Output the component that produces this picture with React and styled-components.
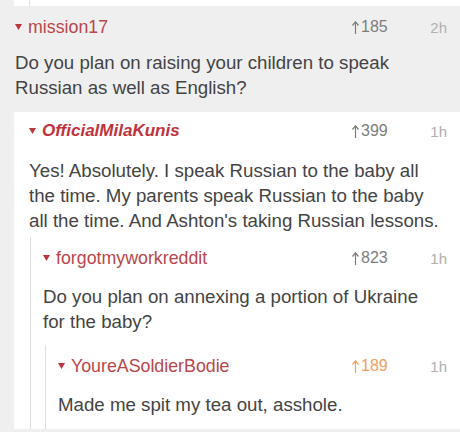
import React from 'react';
import styled, { createGlobalStyle } from 'styled-components';

const GlobalStyle = createGlobalStyle`
  html, body {
    margin: 0;
    padding: 0;
    background: #efefef;
  }
  body {
    font-family: "Liberation Sans", Arial, sans-serif;
    -webkit-font-smoothing: antialiased;
  }
`;

const Page = styled.div`
  width: 460px;
  height: 432px;
  overflow: hidden;
  background: #efefef;
`;

// tail end of the thread above, cut off by the top edge
const PrevTail = styled.div`
  margin-left: 14px;
  height: 6px;
  background: #fff;
  display: flex;
`;

const PrevLine = styled.div`
  margin-left: 15px;
  flex: 1;
  border-left: 1px solid #e2e2e2;
`;

const CommentBox = styled.div`
  background: ${(p) => (p.$depth === 0 ? '#efefef' : '#fff')};
  margin-left: ${(p) => p.$indent}px;
  border-left: ${(p) => (p.$depth >= 2 ? '1px solid #e0e0e0' : 'none')};
`;

const Content = styled.div`
  padding: ${(p) => p.$top}px 13px ${(p) => p.$bottom}px ${(p) => p.$pad}px;
`;

const Header = styled.div`
  display: flex;
  align-items: center;
  height: 22px;
  margin-bottom: ${(p) => p.$gap}px;
`;

const Author = styled.span`
  flex: 1;
  display: flex;
  align-items: center;
  gap: 6px;
  font-size: ${(p) => (p.$op ? 17 : 17.8)}px;
  color: ${(p) => (p.$op ? '#c1323b' : '#b9474b')};
  font-weight: ${(p) => (p.$op ? 700 : 400)};
  font-style: ${(p) => (p.$op ? 'italic' : 'normal')};
`;

const Score = styled.span`
  display: flex;
  align-items: center;
  gap: 2px;
  width: 68px;
  font-size: 16px;
  color: ${(p) => (p.$voted ? '#efa061' : '#7d7d7d')};
`;

const Age = styled.span`
  width: 27px;
  text-align: right;
  font-size: 15px;
  color: #b0b0b0;
`;

const Body = styled.p`
  margin: 0 -8px 0 0;
  font-size: 18.7px;
  line-height: 25px;
  color: #444;
`;

const Line = styled.span`
  display: block;
  white-space: nowrap;
`;

const Caret = () => (
  <svg width="7" height="6" viewBox="0 0 7 6">
    <path d="M0 0 H7 L3.5 6 Z" fill="#b9363c" />
  </svg>
);

const UpArrow = ({ color }) => (
  <svg width="7" height="13" viewBox="0 0 7 13">
    <path d="M3.5 1 V13" stroke={color} strokeWidth="1.2" fill="none" />
    <path d="M0.5 4.5 L3.5 0.8 L6.5 4.5" stroke={color} strokeWidth="1.2" fill="none" />
  </svg>
);

// per nesting level: indent, left padding, top/bottom padding, header gap
const levels = [
  { indent: 0, pad: 15, top: 10, bottom: 12, gap: 12 },
  { indent: 14, pad: 15, top: 8, bottom: 4, gap: 16 },
  { indent: 16, pad: 12, top: 10, bottom: 11, gap: 15 },
  { indent: 14, pad: 12, top: 10, bottom: 12, gap: 15 },
];

const Comment = ({ item, depth = 0 }) => {
  const lv = levels[depth];
  return (
    <CommentBox $depth={depth} $indent={lv.indent}>
      <Content $pad={lv.pad} $top={lv.top} $bottom={lv.bottom}>
        <Header $gap={lv.gap}>
          <Author $op={item.op}>
            <Caret />
            {item.author}
          </Author>
          <Score $voted={item.voted}>
            <UpArrow color={item.voted ? '#efa061' : '#7d7d7d'} />
            {item.score}
          </Score>
          <Age>{item.age}</Age>
        </Header>
        <Body>
          {item.lines.map((l, i) => (
            <Line key={i}>{l}</Line>
          ))}
        </Body>
      </Content>
      {item.replies &&
        item.replies.map((reply, i) => (
          <Comment key={i} item={reply} depth={depth + 1} />
        ))}
    </CommentBox>
  );
};

const thread = {
  author: 'mission17',
  score: 185,
  age: '2h',
  lines: ['Do you plan on raising your children to speak', 'Russian as well as English?'],
  replies: [
    {
      author: 'OfficialMilaKunis',
      op: true,
      score: 399,
      age: '1h',
      lines: [
        'Yes! Absolutely. I speak Russian to the baby all',
        'the time. My parents speak Russian to the baby',
        "all the time. And Ashton's taking Russian lessons.",
      ],
      replies: [
        {
          author: 'forgotmyworkreddit',
          score: 823,
          age: '1h',
          lines: ['Do you plan on annexing a portion of Ukraine', 'for the baby?'],
          replies: [
            {
              author: 'YoureASoldierBodie',
              score: 189,
              voted: true,
              age: '1h',
              lines: ['Made me spit my tea out, asshole.'],
            },
          ],
        },
      ],
    },
  ],
};

export default function App() {
  return (
    <>
      <GlobalStyle />
      <Page>
        <PrevTail>
          <PrevLine />
        </PrevTail>
        <Comment item={thread} />
      </Page>
    </>
  );
}
